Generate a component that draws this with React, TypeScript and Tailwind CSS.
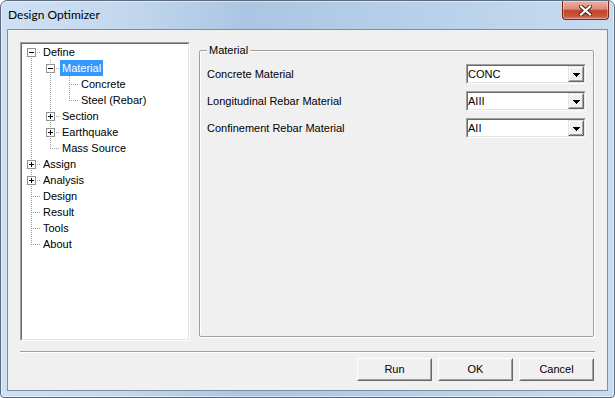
import React from 'react';

type CellSpec = { up?: boolean; down?: boolean; right?: boolean; box?: 'plus' | 'minus' };
type Cell = CellSpec | 'pipe';

const P: Cell = 'pipe';

const rows: { text: string; cells: Cell[]; selected?: boolean }[] = [
  { text: 'Define', cells: [{ down: true, right: true, box: 'minus' }] },
  { text: 'Material', cells: [P, { up: true, down: true, right: true, box: 'minus' }], selected: true },
  { text: 'Concrete', cells: [P, P, { up: true, down: true, right: true }] },
  { text: 'Steel (Rebar)', cells: [P, P, { up: true, right: true }] },
  { text: 'Section', cells: [P, { up: true, down: true, right: true, box: 'plus' }] },
  { text: 'Earthquake', cells: [P, { up: true, down: true, right: true, box: 'plus' }] },
  { text: 'Mass Source', cells: [P, { up: true, right: true }] },
  { text: 'Assign', cells: [{ up: true, down: true, right: true, box: 'plus' }] },
  { text: 'Analysis', cells: [{ up: true, down: true, right: true, box: 'plus' }] },
  { text: 'Design', cells: [{ up: true, down: true, right: true }] },
  { text: 'Result', cells: [{ up: true, down: true, right: true }] },
  { text: 'Tools', cells: [{ up: true, down: true, right: true }] },
  { text: 'About', cells: [{ up: true, right: true }] },
];

function TreeCell({ cell }: { cell: Cell }) {
  const c: CellSpec = cell === 'pipe' ? { up: true, down: true } : cell;
  const box = !!c.box;
  const dot = { stroke: '#a0a0a0', strokeWidth: 1, strokeDasharray: '1 1' };
  return (
    <svg width="19" height="16" viewBox="0 0 19 16" className="block shrink-0" shapeRendering="crispEdges">
      {c.up && <line x1="9.5" y1="0" x2="9.5" y2={box ? 4 : 9} {...dot} />}
      {c.down && <line x1="9.5" y1={box ? 14 : 8} x2="9.5" y2="16" {...dot} />}
      {c.right && <line x1={box ? 15 : 11} y1="8.5" x2="19" y2="8.5" {...dot} />}
      {box && (
        <>
          <rect x="5.5" y="4.5" width="8" height="8" fill="#fff" stroke="#919191" />
          <line x1="7" y1="8.5" x2="12" y2="8.5" stroke="#000" />
          {c.box === 'plus' && <line x1="9.5" y1="6" x2="9.5" y2="11" stroke="#000" />}
        </>
      )}
    </svg>
  );
}

function Combo({ value }: { value: string }) {
  return (
    <div className="w-[120px] h-[20px] border border-t-[#a0a0a0] border-l-[#a0a0a0] border-b-white border-r-white">
      <div className="h-full border border-t-[#696969] border-l-[#696969] border-b-[#e3e3e3] border-r-[#e3e3e3] bg-white flex items-center">
        <span className="flex-1 leading-[16px]">{value}</span>
        <div className="w-[16px] h-[16px] border border-t-[#e3e3e3] border-l-[#e3e3e3] border-r-[#696969] border-b-[#696969] bg-[#f0f0f0]">
          <div className="w-full h-full border border-t-white border-l-white border-r-[#a0a0a0] border-b-[#a0a0a0] flex items-center justify-center">
            <svg width="7" height="4" viewBox="0 0 7 4" className="block mt-[1px]" shapeRendering="crispEdges">
              <polygon points="0,0 7,0 3.5,4" fill="#000" />
            </svg>
          </div>
        </div>
      </div>
    </div>
  );
}

function Btn({ label }: { label: string }) {
  return (
    <button className="w-[75px] h-[23px] p-0 border border-t-white border-l-white border-r-[#696969] border-b-[#696969] bg-[#f0f0f0] text-[11px] text-black">
      <div className="h-full border border-t-[#f0f0f0] border-l-[#f0f0f0] border-r-[#a0a0a0] border-b-[#a0a0a0] flex items-center justify-center">
        {label}
      </div>
    </button>
  );
}

export default function App() {
  return (
    <div className="w-[615px] h-[398px] bg-white font-['Liberation_Sans',Arial,sans-serif] text-[11px] text-black">
      <div className="w-full h-full flex flex-col rounded-t-[7px] rounded-b-[4px] border border-[#5d6b7d] bg-[linear-gradient(90deg,#cfe0f3_0%,#c3d8ef_20%,#abc5e2_40%,#b3cce7_58%,#bcd3ec_78%,#c7dcf1_100%)] shadow-[inset_0_0_0_1px_rgba(255,255,255,0.5)]">
        <div className="h-[28px] shrink-0 flex items-start">
          <div className="pl-[7px] pt-[6px] text-[12px] leading-[16px] font-['Lato',sans-serif] text-black">Design Optimizer</div>
          <div className="ml-auto mr-[5px] w-[47px] h-[19px] rounded-b-[4px] border border-t-0 border-[#7a2516] bg-[linear-gradient(180deg,#ebb2a4_0%,#dc8a77_45%,#c7452c_52%,#c9503a_80%,#d87a5e_100%)] shadow-[inset_0_0_0_1px_rgba(255,255,255,0.35)] flex items-center justify-center">
            <svg width="13" height="11" viewBox="0 0 13 11" className="block">
              <path d="M2 1.5 L11 9.5 M11 1.5 L2 9.5" stroke="#4d1a10" strokeWidth="4" strokeLinecap="square" />
              <path d="M2 1.5 L11 9.5 M11 1.5 L2 9.5" stroke="#ffffff" strokeWidth="2.2" strokeLinecap="square" />
            </svg>
          </div>
        </div>
        <div className="flex-1 mx-[6px] mb-[6px] border border-[#7d8ea3] bg-[#f0f0f0] flex flex-col">
          <div className="flex pl-[12px] pt-[12px]">
            <div className="w-[170px] h-[299px] shrink-0 border border-t-[#a0a0a0] border-l-[#a0a0a0] border-b-white border-r-white">
              <div className="w-full h-full border border-t-[#696969] border-l-[#696969] border-b-[#e3e3e3] border-r-[#e3e3e3] bg-white flex flex-col">
                {rows.map((r) => (
                  <div key={r.text} className="flex items-center h-[16px]">
                    {r.cells.map((c, i) => (
                      <TreeCell key={i} cell={c} />
                    ))}
                    <span
                      className={
                        r.selected
                          ? 'h-[16px] leading-[16px] px-[2px] bg-[#3399ff] text-white whitespace-nowrap'
                          : 'h-[16px] leading-[16px] px-[2px] whitespace-nowrap'
                      }
                    >
                      {r.text}
                    </span>
                  </div>
                ))}
              </div>
            </div>
            <fieldset className="ml-[9px] mt-[2px] w-[395px] h-[293px] shrink-0 border border-[#a0a0a0] rounded-[2px] pl-[7px] pr-[7px] pt-[8px] shadow-[inset_1px_1px_0_#fff,1px_1px_0_#fff]">
              <legend className="px-[2px] leading-[12px] bg-[#f0f0f0] relative">Material</legend>
              <div className="flex flex-col gap-[7px]">
                <div className="flex items-center justify-between h-[20px]">
                  <span>Concrete Material</span>
                  <Combo value="CONC" />
                </div>
                <div className="flex items-center justify-between h-[20px]">
                  <span>Longitudinal Rebar Material</span>
                  <Combo value="AIII" />
                </div>
                <div className="flex items-center justify-between h-[20px]">
                  <span>Confinement Rebar Material</span>
                  <Combo value="AII" />
                </div>
              </div>
            </fieldset>
          </div>
          <div className="ml-[12px] mr-[12px] mt-[10px] h-[2px] border-t border-t-[#a0a0a0] border-b border-b-white" />
          <div className="flex justify-end gap-[6px] mr-[13px] mt-[5px]">
            <Btn label="Run" />
            <Btn label="OK" />
            <Btn label="Cancel" />
          </div>
        </div>
      </div>
    </div>
  );
}
